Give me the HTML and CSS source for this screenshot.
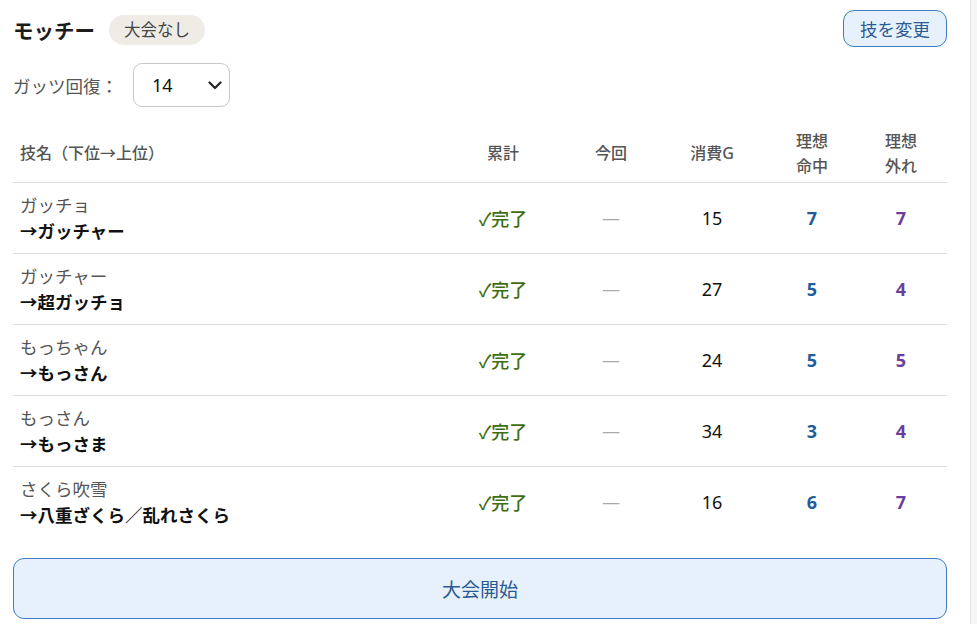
FILE: index.html
```html
<!DOCTYPE html>
<html lang="ja">
<head>
    <meta charset="UTF-8">
    <meta name="viewport" content="width=device-width, initial-scale=1.0">
    <title>モッチー</title>
    <link rel="stylesheet" href="styles.css">
</head>
<body>
    <div class="panel">
        <!-- Header -->
        <div class="head">
            <div class="head-left">
                <span class="name">モッチー</span>
                <span class="badge">大会なし</span>
            </div>
            <button class="btn-small">技を変更</button>
        </div>

        <div class="guts">
            <label for="guts">ガッツ回復：</label>
            <div class="select-wrap">
                <select id="guts">
                    <option>12</option>
                    <option>13</option>
                    <option selected>14</option>
                    <option>15</option>
                </select>
                <svg class="chev" width="14" height="9" viewBox="0 0 14 9"><path d="M1.5 1.5 L7 7 L12.5 1.5" fill="none" stroke="#222" stroke-width="2.2" stroke-linecap="round" stroke-linejoin="round"/></svg>
            </div>
        </div>

        <table class="moves">
            <thead>
                <tr>
                    <th class="col-name">技名（下位→上位）</th>
                    <th class="col-total">累計</th>
                    <th class="col-now">今回</th>
                    <th class="col-cost">消費G</th>
                    <th class="col-hit">理想<br>命中</th>
                    <th class="col-miss">理想<br>外れ</th>
                </tr>
            </thead>
            <tbody>
                <tr>
                    <td class="col-name"><div class="from">ガッチョ</div><div class="to">→ガッチャー</div></td>
                    <td class="done">✓完了</td>
                    <td class="dash">—</td>
                    <td class="cost">15</td>
                    <td class="hit">7</td>
                    <td class="miss">7</td>
                </tr>
                <tr>
                    <td class="col-name"><div class="from">ガッチャー</div><div class="to">→超ガッチョ</div></td>
                    <td class="done">✓完了</td>
                    <td class="dash">—</td>
                    <td class="cost">27</td>
                    <td class="hit">5</td>
                    <td class="miss">4</td>
                </tr>
                <tr>
                    <td class="col-name"><div class="from">もっちゃん</div><div class="to">→もっさん</div></td>
                    <td class="done">✓完了</td>
                    <td class="dash">—</td>
                    <td class="cost">24</td>
                    <td class="hit">5</td>
                    <td class="miss">5</td>
                </tr>
                <tr>
                    <td class="col-name"><div class="from">もっさん</div><div class="to">→もっさま</div></td>
                    <td class="done">✓完了</td>
                    <td class="dash">—</td>
                    <td class="cost">34</td>
                    <td class="hit">3</td>
                    <td class="miss">4</td>
                </tr>
                <tr>
                    <td class="col-name"><div class="from">さくら吹雪</div><div class="to">→八重ざくら／乱れさくら</div></td>
                    <td class="done">✓完了</td>
                    <td class="dash">—</td>
                    <td class="cost">16</td>
                    <td class="hit">6</td>
                    <td class="miss">7</td>
                </tr>
            </tbody>
        </table>

        <button class="btn-big">大会開始</button>
    </div>
</body>
</html>
```

FILE: styles.css
```css
body {
    margin: 0;
    padding: 0;
    background-color: #f6f6f6;
    font-family: "Noto Sans", "Noto Sans CJK JP", sans-serif;
    color: #111;
}
.panel {
    width: 934px;
    padding: 10px 23px 6px 13px;
    background-color: white;
    border-right: 1px solid #e4e4e4;
    min-height: 608px;
}
.head {
    display: flex;
    justify-content: space-between;
    align-items: center;
    height: 36px;
}
.head-left {
    display: flex;
    align-items: center;
    gap: 14px;
    padding-top: 3px;
}
.name {
    font-size: 20.5px;
    font-weight: bold;
    color: #1c1c1c;
}
.badge {
    display: inline-block;
    height: 30px;
    line-height: 30px;
    padding: 0 15px;
    border-radius: 15px;
    background-color: #efece6;
    color: #444;
    font-size: 16.5px;
}
.btn-small {
    height: 37px;
    padding: 0 16px;
    border: 1px solid #3f7cc0;
    border-radius: 11px;
    background-color: #e7f1fc;
    color: #2b5b94;
    font-family: inherit;
    font-size: 17.5px;
    cursor: pointer;
}
.guts {
    display: flex;
    align-items: center;
    gap: 15px;
    margin-top: 17px;
}
.guts label {
    font-size: 17.5px;
    color: #555;
}
.select-wrap {
    position: relative;
    width: 97px;
    height: 44px;
}
.select-wrap select {
    appearance: none;
    -webkit-appearance: none;
    width: 97px;
    height: 44px;
    padding: 0 0 0 18px;
    border: 1px solid #c9c9c9;
    border-radius: 9px;
    background-color: white;
    font-family: inherit;
    font-size: 18px;
    color: #111;
}
.chev {
    position: absolute;
    right: 8px;
    top: 18px;
    pointer-events: none;
}
.moves {
    width: 934px;
    margin-top: 18px;
    border-collapse: collapse;
    table-layout: fixed;
}
.moves th {
    height: 57px;
    padding: 0;
    font-size: 16px;
    font-weight: 500;
    color: #555;
    line-height: 25px;
    text-align: center;
    border-bottom: 1px solid #dcdcdc;
}
.moves th.col-name {
    text-align: left;
    padding-left: 7px;
}
.col-name { width: 419px; }
.col-total { width: 128px; }
.col-now { width: 88px; }
.col-cost { width: 114px; }
.col-hit { width: 86px; }
.col-miss { width: 92px; }
.moves td {
    height: 70px;
    padding: 0;
    text-align: center;
    font-size: 18px;
    border-bottom: 1px solid #dcdcdc;
}
.moves tbody tr:last-child td {
    border-bottom: none;
}
.moves td.col-name {
    text-align: left;
    padding-left: 7px;
}
.from {
    font-size: 17.5px;
    color: #555;
    line-height: 26px;
}
.to {
    font-size: 17.5px;
    font-weight: bold;
    color: #111;
    line-height: 26px;
}
.done {
    color: #3f6e12;
    font-size: 19px;
    font-weight: 500;
}
.dash {
    color: #aaa;
}
.cost {
    color: #111;
}
.hit {
    color: #1f5e9a;
    font-weight: bold;
}
.miss {
    color: #6b3d9d;
    font-weight: bold;
}
.btn-big {
    display: block;
    width: 934px;
    height: 61px;
    margin-top: 21px;
    border: 1px solid #3f7cc0;
    border-radius: 11px;
    background-color: #e7f1fc;
    color: #2b5b94;
    font-family: inherit;
    font-size: 19px;
    cursor: pointer;
}
```
